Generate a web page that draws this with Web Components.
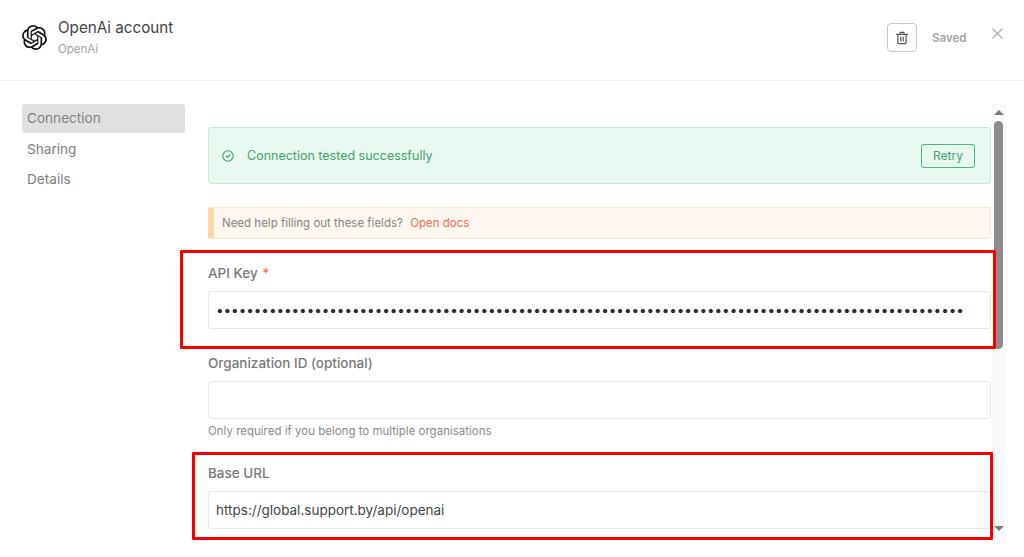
<!DOCTYPE html>
<html>
<head>
<meta charset="utf-8">
<title>OpenAi account</title>
<style>
  html, body { margin: 0; height: 100%; background: #fff; overflow: hidden; }
  body { font-family: Inter, "Liberation Sans", sans-serif; color: #555; }
</style>
</head>
<body>

<account-modal>
  <modal-header slot="header" title="OpenAi account" subtitle="OpenAi"></modal-header>
  <side-nav slot="nav">
    <nav-item active>Connection</nav-item>
    <nav-item>Sharing</nav-item>
    <nav-item>Details</nav-item>
  </side-nav>
  <scroll-pane slot="main">
    <success-banner>Connection tested successfully</success-banner>
    <docs-banner></docs-banner>
    <form-field label="API Key" required masked="99"></form-field>
    <form-field label="Organization ID (optional)" hint="Only required if you belong to multiple organisations"></form-field>
    <form-field label="Base URL" value="https://global.support.by/api/openai"></form-field>
  </scroll-pane>
  <mark-box slot="marks" style="left:180px;top:250px;width:816px;height:99px"></mark-box>
  <mark-box slot="marks" style="left:192px;top:452px;width:801px;height:88px"></mark-box>
</account-modal>

<script>
class AccountModal extends HTMLElement {
  constructor() {
    super();
    this.attachShadow({ mode: 'open' }).innerHTML = `
      <style>
        :host { display: flex; flex-direction: column; position: relative; height: 557px; overflow: hidden; }
        .body { display: flex; padding-left: 22px; gap: 23px; }
      </style>
      <slot name="header"></slot>
      <div class="body">
        <slot name="nav"></slot>
        <slot name="main"></slot>
      </div>
      <slot name="marks"></slot>
    `;
  }
}

class ModalHeader extends HTMLElement {
  constructor() {
    super();
    this.attachShadow({ mode: 'open' }).innerHTML = `
      <style>
        :host { display: flex; align-items: flex-start; height: 80px; border-bottom: 1px solid #ececec; padding: 0 21px 0 22px; }
        .logo { width: 25px; height: 25px; margin: 25px 11px 0 0; flex: none; }
        .names { flex: 1; padding-top: 19px; }
        .title { font-size: 15.2px; line-height: 18px; color: #444; }
        .sub { font-size: 11.5px; line-height: 14px; color: #a3a3a3; margin-top: 5px; }
        .trash { width: 30px; height: 29px; box-sizing: border-box; margin-top: 23px; border: 1px solid #c8c8c8; border-radius: 4px; display: flex; align-items: center; justify-content: center; background: #fff; }
        .trash svg { width: 14px; height: 14px; }
        .saved { font-size: 11.5px; font-weight: 600; line-height: 14px; color: #a5a5a5; margin: 31px 25px 0 15px; width: 35px; }
        .close { width: 11px; height: 11px; margin-top: 28px; }
      </style>
      <svg class="logo" viewBox="0 0 24 24" fill="#111"><path d="M22.2819 9.8211a5.9847 5.9847 0 0 0-.5157-4.9108 6.0462 6.0462 0 0 0-6.5098-2.9A6.0651 6.0651 0 0 0 4.9807 4.1818a5.9847 5.9847 0 0 0-3.9977 2.9 6.0462 6.0462 0 0 0 .7427 7.0966 5.98 5.98 0 0 0 .511 4.9107 6.051 6.051 0 0 0 6.5146 2.9001A5.9847 5.9847 0 0 0 13.2599 24a6.0557 6.0557 0 0 0 5.7718-4.2058 5.9894 5.9894 0 0 0 3.9977-2.9001 6.0557 6.0557 0 0 0-.7475-7.0729zm-9.022 12.6081a4.4755 4.4755 0 0 1-2.8764-1.0408l.1419-.0804 4.7783-2.7582a.7948.7948 0 0 0 .3927-.6813v-6.7369l2.02 1.1686a.071.071 0 0 1 .038.052v5.5826a4.504 4.504 0 0 1-4.4945 4.4944zm-9.6607-4.1254a4.4708 4.4708 0 0 1-.5346-3.0137l.142.0852 4.783 2.7582a.7712.7712 0 0 0 .7806 0l5.8428-3.3685v2.3324a.0804.0804 0 0 1-.0332.0615L9.74 19.9502a4.4992 4.4992 0 0 1-6.1408-1.6464zM2.3408 7.8956a4.485 4.485 0 0 1 2.3655-1.9728V11.6a.7664.7664 0 0 0 .3879.6765l5.8144 3.3543-2.0201 1.1685a.0757.0757 0 0 1-.071 0l-4.8303-2.7865A4.504 4.504 0 0 1 2.3408 7.872zm16.5963 3.8558L13.1038 8.364 15.1192 7.2a.0757.0757 0 0 1 .071 0l4.8303 2.7913a4.4944 4.4944 0 0 1-.6765 8.1042v-5.6772a.79.79 0 0 0-.407-.667zm2.0107-3.0231l-.142-.0852-4.7735-2.7818a.7759.7759 0 0 0-.7854 0L9.409 9.2297V6.8974a.0662.0662 0 0 1 .0284-.0615l4.8303-2.7866a4.4992 4.4992 0 0 1 6.6802 4.66zM8.3065 12.863l-2.02-1.1638a.0804.0804 0 0 1-.038-.0567V6.0742a4.4992 4.4992 0 0 1 7.3757-3.4537l-.142.0805L8.704 5.459a.7948.7948 0 0 0-.3927.6813zm1.0976-2.3654l2.602-1.4998 2.6069 1.4998v2.9994l-2.5974 1.4997-2.6067-1.4997Z"/></svg>
      <div class="names">
        <div class="title"></div>
        <div class="sub"></div>
      </div>
      <div class="trash">
        <svg viewBox="0 0 14 14" fill="none" stroke="#555" stroke-width="1.2" stroke-linecap="round" stroke-linejoin="round">
          <path d="M1.6 3.4h10.8M5 3.2V1.9q0-.5.5-.5h3q.5 0 .5.5v1.3M2.9 3.6v8q0 1 1 1h6.2q1 0 1-1v-8M5.8 6v4M8.2 6v4"/>
        </svg>
      </div>
      <div class="saved">Saved</div>
      <svg class="close" viewBox="0 0 11 11" stroke="#aaa" stroke-width="1.1" fill="none"><path d="M.5.5l10 10M10.5.5l-10 10"/></svg>
    `;
    this.shadowRoot.querySelector('.title').textContent = this.getAttribute('title');
    this.shadowRoot.querySelector('.sub').textContent = this.getAttribute('subtitle');
  }
}

class SideNav extends HTMLElement {
  constructor() {
    super();
    this.attachShadow({ mode: 'open' }).innerHTML = `
      <style>
        :host { display: flex; flex-direction: column; gap: 1.5px; width: 163px; flex: none; padding-top: 23px; }
      </style>
      <slot></slot>
    `;
  }
}

class NavItem extends HTMLElement {
  constructor() {
    super();
    this.attachShadow({ mode: 'open' }).innerHTML = `
      <style>
        :host { display: block; height: 29px; line-height: 28px; padding-left: 5px; font-size: 13.6px; color: #808080; border-radius: 3px; }
        :host([active]) { background: #e0e0e0; }
      </style>
      <slot></slot>
    `;
  }
}

class ScrollPane extends HTMLElement {
  constructor() {
    super();
    this.attachShadow({ mode: 'open' }).innerHTML = `
      <style>
        :host { display: flex; width: 798px; height: 433px; margin-top: 23px; flex: none; }
        .content { width: 783px; flex: none; margin-right: 1px; padding-top: 23px; display: flex; flex-direction: column; overflow: hidden; }
        .bar { width: 14px; flex: none; background: #fafafa; position: relative; }
        .up, .down { position: absolute; left: 1.5px; width: 0; height: 0; border-left: 5px solid transparent; border-right: 5px solid transparent; }
        .up { top: 6px; border-bottom: 5px solid #7a7a7a; }
        .down { bottom: 6px; border-top: 5px solid #7a7a7a; }
        .thumb { position: absolute; left: 2px; width: 9px; top: 17px; height: 228px; background: #8c8c8c; border-radius: 5px; }
      </style>
      <div class="content"><slot></slot></div>
      <div class="bar"><div class="up"></div><div class="thumb"></div><div class="down"></div></div>
    `;
  }
}

class SuccessBanner extends HTMLElement {
  constructor() {
    super();
    this.attachShadow({ mode: 'open' }).innerHTML = `
      <style>
        :host { display: flex; align-items: center; flex: none; box-sizing: border-box; height: 57px; padding: 0 15px 0 13px; background: #e9f8f0; border: 1px solid #c4ecd6; border-radius: 3px; color: #3fa36e; font-size: 12.5px; }
        svg { width: 12px; height: 12px; margin-right: 13px; flex: none; }
        .text { flex: 1; }
        .retry { box-sizing: border-box; width: 54px; height: 24px; line-height: 22px; text-align: center; border: 1px solid #4fb57f; border-radius: 3px; font-size: 12px; }
      </style>
      <svg viewBox="0 0 12 12" fill="none" stroke="#38a66b" stroke-width="1.1" stroke-linecap="round" stroke-linejoin="round"><circle cx="6" cy="6" r="5.2"/><path d="M4.2 6.1l1.3 1.3 2.4-2.6"/></svg>
      <div class="text"><slot></slot></div>
      <div class="retry">Retry</div>
    `;
  }
}

class DocsBanner extends HTMLElement {
  constructor() {
    super();
    this.attachShadow({ mode: 'open' }).innerHTML = `
      <style>
        :host { display: block; flex: none; box-sizing: border-box; height: 32px; line-height: 30px; margin-top: 23px; padding-left: 8px; background: #fdf7ef; border: 1px solid #f6e8d6; border-left: 6px solid #f7d8a8; border-radius: 2px; font-size: 11.5px; color: #858585; }
        a { color: #f7695e; margin-left: 4px; }
      </style>
      Need help filling out these fields? <a>Open docs</a>
    `;
  }
}

class FormField extends HTMLElement {
  constructor() {
    super();
    this.attachShadow({ mode: 'open' }).innerHTML = `
      <style>
        :host { display: block; flex: none; margin-top: 25px; }
        .label { font-size: 13.5px; font-weight: 500; line-height: 18px; color: #7a7a7a; margin-bottom: 9px; }
        .label b { color: #f7695e; font-weight: 500; margin-left: 1px; }
        .input { box-sizing: border-box; height: 38px; line-height: 36px; padding: 0 7px; border: 1px solid #e8e8e8; border-radius: 3px; font-size: 13.5px; color: #444; white-space: nowrap; overflow: hidden; }
        .input.dots { color: #2b2b2b; font-size: 13.5px; letter-spacing: -.04px; }
        .hint { font-size: 11.5px; line-height: 14px; color: #8a8a8a; margin-top: 5px; margin-bottom: 1px; }
      </style>
      <div class="label"></div>
      <div class="input" contenteditable="true" spellcheck="false"></div>
    `;
    const root = this.shadowRoot;
    const label = root.querySelector('.label');
    label.textContent = this.getAttribute('label');
    if (this.hasAttribute('required')) {
      const star = document.createElement('b');
      star.textContent = ' *';
      label.appendChild(star);
    }
    const input = root.querySelector('.input');
    if (this.hasAttribute('masked')) {
      input.classList.add('dots');
      input.textContent = '•'.repeat(+this.getAttribute('masked'));
    } else if (this.hasAttribute('value')) {
      input.textContent = this.getAttribute('value');
    }
    if (this.hasAttribute('hint')) {
      const hint = document.createElement('div');
      hint.className = 'hint';
      hint.textContent = this.getAttribute('hint');
      root.appendChild(hint);
    }
  }
}

class MarkBox extends HTMLElement {
  constructor() {
    super();
    this.attachShadow({ mode: 'open' }).innerHTML = `
      <style>
        :host { display: block; position: absolute; box-sizing: border-box; border: 3px solid #f50000; border-radius: 1px; pointer-events: none; }
      </style>
    `;
  }
}

customElements.define('account-modal', AccountModal);
customElements.define('modal-header', ModalHeader);
customElements.define('side-nav', SideNav);
customElements.define('nav-item', NavItem);
customElements.define('scroll-pane', ScrollPane);
customElements.define('success-banner', SuccessBanner);
customElements.define('docs-banner', DocsBanner);
customElements.define('form-field', FormField);
customElements.define('mark-box', MarkBox);
</script>
</body>
</html>
